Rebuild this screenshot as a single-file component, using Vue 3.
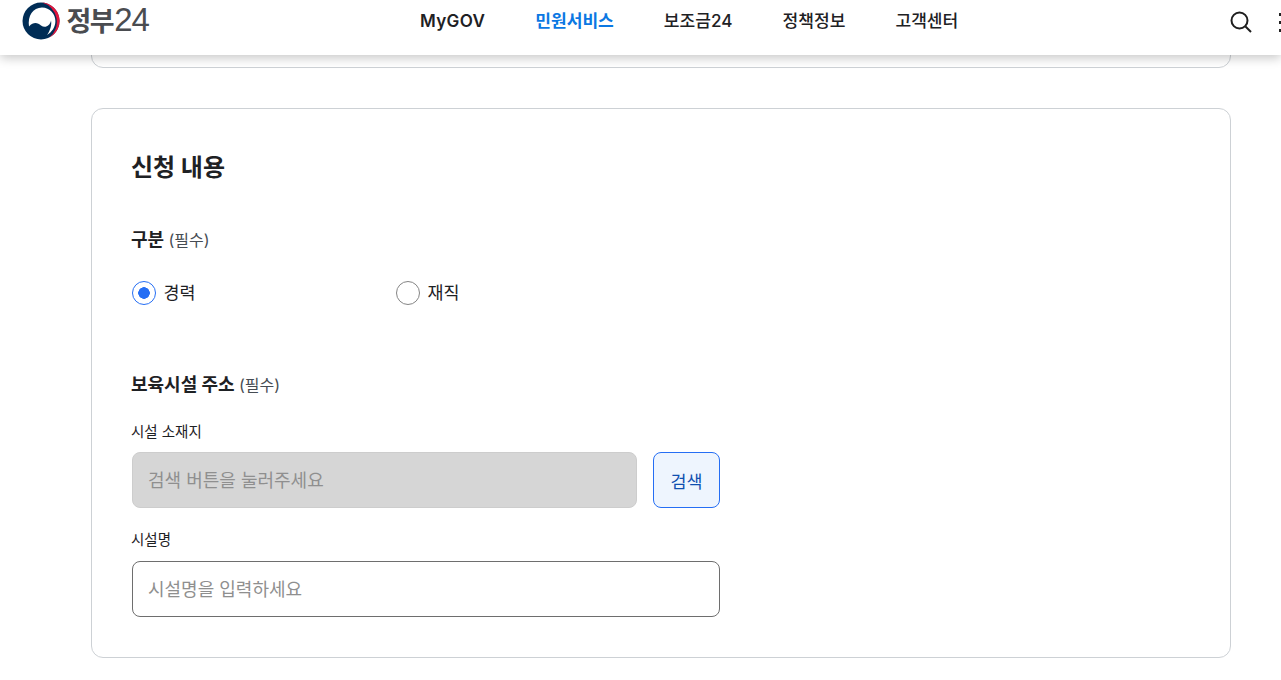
<template>
  <div class="page">
    <header class="top">
      <a class="logo">
        <svg width="38" height="38" viewBox="0 0 38 38">
          <circle cx="19" cy="19" r="18.500" fill="#002d56" />
          <path d="M20 .5A18.500 18.500 0 0 1 27 35.700A20 20 0 0 0 20 .5z" fill="#e0143c" />
          <path d="M7 24.500C5.500 14 11 5.500 20 5.500C28 5.500 33.400 12 33.400 19C33.400 25 30 30 25 33C28 29 30 23 29 18.500C28 24 23 26.500 19 23.500C16 21 12 19 7 24.500z" fill="#fff" />
        </svg>
        <span class="logo-text">정부<b>24</b></span>
      </a>
      <nav class="gnb">
        <a v-for="m in menus" :key="m" :class="{ on: m === '민원서비스', en: m === 'MyGOV' }">{{ m }}</a>
      </nav>
      <div class="tools">
        <svg width="24" height="24" viewBox="0 0 24 24" fill="none" stroke="#1e1e1e" stroke-width="2">
          <circle cx="10.500" cy="10.500" r="8" />
          <path d="M16.500 16.500l5.500 5.500" />
        </svg>
        <div class="dots"><i></i><i></i><i></i></div>
      </div>
    </header>

    <main class="wrap">
      <section class="card stub"></section>

      <section class="card form">
        <h2>신청 내용</h2>

        <div class="group-title">구분 <small>(필수)</small></div>
        <div class="radios">
          <label v-for="r in radios" :key="r" class="radio" @click="kind = r">
            <span class="mark" :class="{ checked: kind === r }"></span>
            {{ r }}
          </label>
        </div>

        <div class="group-title addr">보육시설 주소 <small>(필수)</small></div>

        <div class="label">시설 소재지</div>
        <div class="row">
          <input class="input disabled" placeholder="검색 버튼을 눌러주세요" disabled />
          <button class="btn">검색</button>
        </div>

        <div class="label second">시설명</div>
        <input class="input name" placeholder="시설명을 입력하세요" />
      </section>
    </main>
  </div>
</template>

<script setup>
import { ref } from 'vue';

const menus = ['MyGOV', '민원서비스', '보조금24', '정책정보', '고객센터'];
const radios = ['경력', '재직'];
const kind = ref('경력');
</script>

<style scoped>
.page {
  position: relative;
  width: 100%;
  height: 680px;
  overflow: hidden;
  background: #fff;
  color: #1e2124;
  font-family: Inter, "Noto Sans CJK KR", "Noto Sans", sans-serif;
}

.top {
  position: absolute;
  top: 0;
  left: 0;
  right: 0;
  z-index: 5;
  height: 55px;
  background: #fff;
  box-shadow: 0 3px 10px rgba(0, 0, 0, 0.22);
}

.logo {
  position: absolute;
  left: 21.500px;
  top: 2px;
  display: flex;
  align-items: center;
  gap: 7px;
}

.logo-text {
  font-size: 27px;
  line-height: 36px;
  letter-spacing: -1.500px;
  color: #4a4c50;
  font-weight: 700;
}

.logo-text b {
  font-family: "Liberation Sans", sans-serif;
  font-size: 33px;
  font-weight: 400;
  letter-spacing: -1px;
  margin-left: 1px;
}

.gnb {
  position: absolute;
  left: 420px;
  top: 9px;
  display: flex;
  gap: 50px;
}

.gnb a {
  font-size: 17.100px;
  line-height: 24px;
  font-weight: 500;
  color: #1e2124;
}

.gnb a.en {
  font-weight: 600;
  letter-spacing: 0.300px;
}

.gnb a.on {
  color: #0b78e3;
  font-weight: 700;
}

.tools {
  position: absolute;
  left: 1229px;
  top: 10px;
  display: flex;
  gap: 20px;
}

.dots {
  display: flex;
  flex-direction: column;
  gap: 5px;
  padding-top: 3px;
  margin-left: 6px;
}

.dots i {
  display: block;
  width: 3px;
  height: 3px;
  background: #222;
}

.wrap {
  width: 1140px;
  margin-left: 91px;
}

.card {
  box-sizing: border-box;
  border: 1px solid #cdd1d5;
  border-radius: 12px;
  background: #fff;
}

.stub {
  height: 68px;
  margin-bottom: 40px;
}

.form {
  height: 550px;
  padding: 41px 40px 40px;
}

h2 {
  margin: 0 0 0 -1px;
  font-size: 24px;
  line-height: 36px;
  font-weight: 700;
}

.group-title {
  font-size: 18px;
  line-height: 24px;
  font-weight: 700;
  margin-top: 42px;
  margin-left: -1px;
}

.group-title small {
  font-size: 16px;
  font-weight: 400;
  color: #464c53;
}

.radios {
  display: flex;
  margin-top: 29px;
}

.radio {
  width: 264px;
  display: flex;
  align-items: center;
  gap: 7.500px;
  font-size: 17.400px;
  line-height: 24px;
}

.mark {
  box-sizing: border-box;
  width: 24px;
  height: 24px;
  border: 1px solid #858585;
  border-radius: 50%;
  background: #fff;
}

.mark.checked {
  border: 1.500px solid #256ef4;
  background: radial-gradient(circle, #256ef4 0 5.500px, #fff 6px);
}

.addr {
  margin-top: 68px;
}

.label {
  font-size: 14.500px;
  line-height: 20px;
  margin-top: 25px;
  margin-bottom: 10px;
  margin-left: -1px;
}

.label.second {
  margin-top: 22px;
  margin-bottom: 11px;
}

.row {
  display: flex;
  gap: 16px;
  width: 588px;
}

.input {
  box-sizing: border-box;
  height: 56px;
  padding: 0 15px;
  border: 1px solid #6e6e6e;
  border-radius: 8px;
  font-family: inherit;
  font-size: 18px;
  background: #fff;
  outline: none;
}

.input::placeholder {
  color: #8f8f8f;
  opacity: 1;
}

.input.disabled {
  flex: 1;
  min-width: 0;
  background: #d6d6d6;
  border-color: #cdcdcd;
}

.input.disabled::placeholder {
  color: #8f8f8f;
}

.input.name {
  display: block;
  width: 588px;
}

.btn {
  width: 67px;
  height: 56px;
  border: 1px solid #256ef4;
  border-radius: 8px;
  background: #eef5fe;
  color: #0f4fb0;
  font-family: inherit;
  font-size: 17.400px;
  padding: 0;
}
</style>
